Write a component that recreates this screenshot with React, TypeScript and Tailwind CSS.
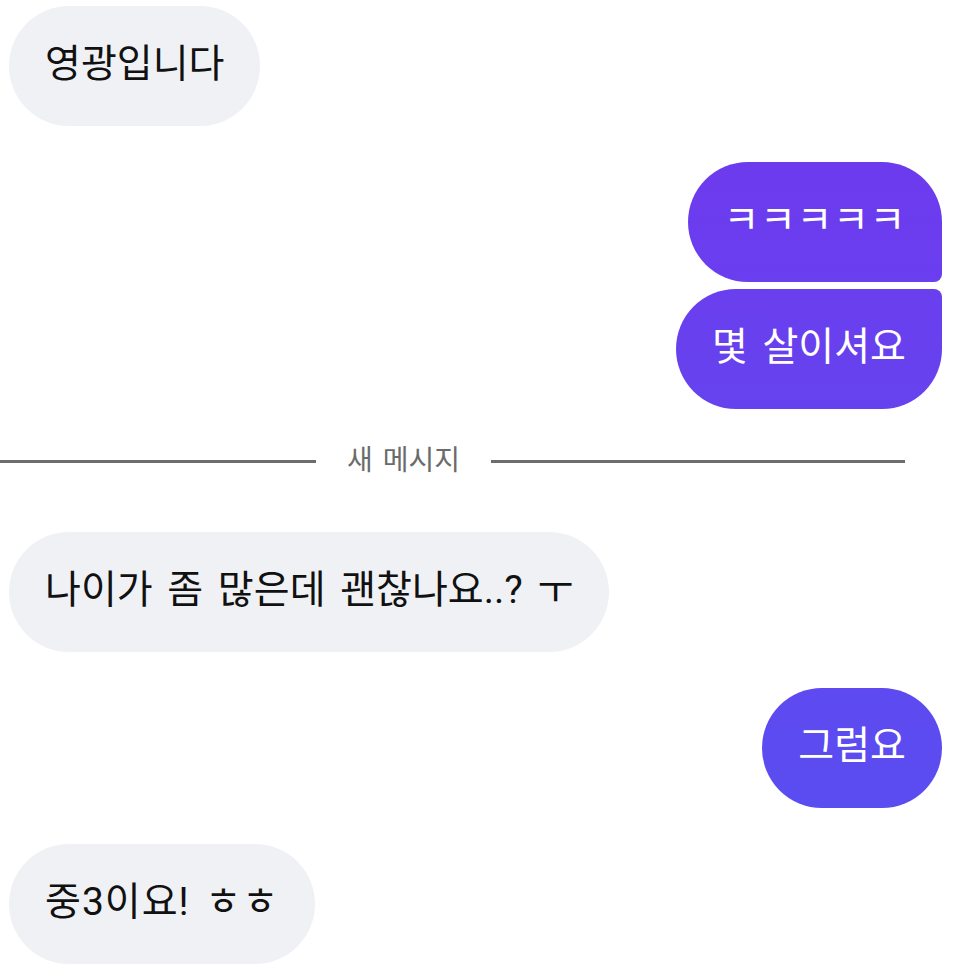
import React from "react";

type Msg = { me: boolean; text: string; shape?: string; gap: string };

const messages: Msg[] = [
  { me: false, text: "영광입니다", gap: "mt-[6px]" },
  { me: true, text: "ㅋㅋㅋㅋㅋ", shape: "rounded-br-[8px] tracking-[0.6px]", gap: "mt-[36px]" },
  { me: true, text: "몇 살이셔요", shape: "rounded-tr-[8px]", gap: "mt-[7px]" },
];

const after: Msg[] = [
  { me: false, text: "나이가 좀 많은데 괜찮나요..? ㅜ", gap: "mt-[56px]" },
  { me: true, text: "그럼요", gap: "mt-[36px]" },
  { me: false, text: "중3이요! ㅎㅎ", shape: "tracking-[1px]", gap: "mt-[36px]" },
];

function Bubble({ m }: { m: Msg }) {
  return (
    <div className={`flex ${m.me ? "justify-end pr-[23px]" : "justify-start pl-[9px]"} ${m.gap}`}>
      <div
        className={`flex h-[120px] items-center rounded-[60px] px-9 text-[39px] leading-none whitespace-pre [word-spacing:5px] ${
          m.me
            ? "bg-linear-to-b from-[#7135ed] to-[#5451f1] bg-fixed text-white"
            : "bg-[#f0f1f5] text-[#111111]"
        } ${m.shape ?? ""}`}
      >
        <span className="-mt-[4px]">{m.text}</span>
      </div>
    </div>
  );
}

export default function App() {
  return (
    <div
      className="min-h-screen w-full bg-white"
      style={{ fontFamily: 'Roboto, "Noto Sans CJK KR", sans-serif' }}
    >
      {messages.map((m, i) => (
        <Bubble key={i} m={m} />
      ))}

      {/* new messages divider */}
      <div className="mt-[37px] flex h-[30px] w-[905px] items-center">
        <div className="h-[3px] w-[316px] bg-[#6d6d6d]" />
        <span className="mx-[31px] text-[28px] leading-none text-[#6b6b6b] [word-spacing:3px]">새 메시지</span>
        <div className="h-[3px] flex-1 bg-[#6d6d6d]" />
      </div>

      {after.map((m, i) => (
        <Bubble key={i} m={m} />
      ))}
    </div>
  );
}
